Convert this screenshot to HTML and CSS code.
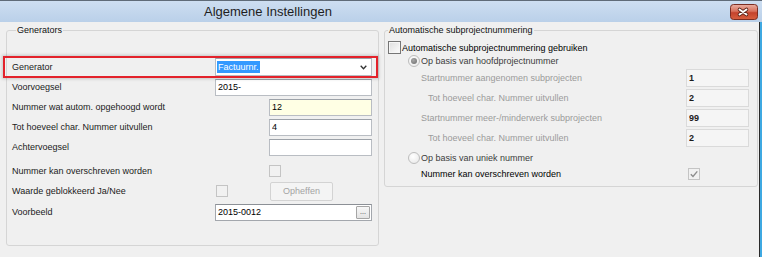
FILE: index.html
```html
<!DOCTYPE html>
<html lang="nl">
  <head>
    <meta charset="UTF-8" />
    <meta name="viewport" content="width=device-width, initial-scale=1.0" />
    <title>Algemene Instellingen</title>
    <link rel="stylesheet" href="styles.css">
  </head>
  <body>
    <div class="window">
      <div class="titlebar">
        <span class="title">Algemene Instellingen</span>
        <button class="close" aria-label="Sluiten">
          <svg width="28" height="16" viewBox="0 0 28 16">
            <defs>
              <linearGradient id="closeGrad" x1="0" y1="0" x2="0" y2="1">
                <stop offset="0" stop-color="#eab0a3" />
                <stop offset="0.45" stop-color="#d8705b" />
                <stop offset="0.55" stop-color="#c4432d" />
                <stop offset="1" stop-color="#d8603f" />
              </linearGradient>
            </defs>
            <rect x="0.5" y="0.5" width="27" height="15" rx="3" fill="url(#closeGrad)" stroke="#7b2d22" />
            <path d="M9.5 5.5 L16.5 10.5 M16.5 5.5 L9.5 10.5" stroke="#5b2419" stroke-width="3.6" stroke-linecap="round" />
            <path d="M9.5 5.5 L16.5 10.5 M16.5 5.5 L9.5 10.5" stroke="#ffffff" stroke-width="1.9" stroke-linecap="round" />
          </svg>
        </button>
      </div>

      <div class="client">
        <fieldset class="group generators">
          <legend>Generators</legend>

          <div class="row">
            <label>Generator</label>
            <div class="combo span">
              <span class="selected">Factuurnr.</span>
              <svg width="7" height="5" viewBox="0 0 7 5">
                <path d="M0.7 0.8 L3.5 3.8 L6.3 0.8" fill="none" stroke="#333" stroke-width="1.3" />
              </svg>
            </div>
          </div>

          <div class="row">
            <label>Voorvoegsel</label>
            <input class="field span" type="text" value="2015-" />
          </div>

          <div class="row">
            <label>Nummer wat autom. opgehoogd wordt</label>
            <input class="field col3 yellow" type="text" value="12" />
          </div>

          <div class="row">
            <label>Tot hoeveel char. Nummer uitvullen</label>
            <input class="field col3" type="text" value="4" />
          </div>

          <div class="row">
            <label>Achtervoegsel</label>
            <input class="field col3" type="text" value="" />
          </div>

          <div class="row spaced">
            <label>Nummer kan overschreven worden</label>
            <span class="check disabled col3"></span>
          </div>

          <div class="row">
            <label>Waarde geblokkeerd Ja/Nee</label>
            <span class="check disabled col2"></span>
            <button class="btn col3" disabled>Opheffen</button>
          </div>

          <div class="row last">
            <label>Voorbeeld</label>
            <div class="field span with-button">
              <span>2015-0012</span>
              <button class="dots">...</button>
            </div>
          </div>
        </fieldset>

        <fieldset class="group subprojects">
          <legend>Automatische subprojectnummering</legend>

          <div class="opt main">
            <span class="check"></span>
            <span class="opt-label">Automatische subprojectnummering gebruiken</span>
          </div>

          <div class="opt radio-row">
            <span class="radio checked"></span>
            <span class="opt-label muted">Op basis van hoofdprojectnummer</span>
          </div>

          <div class="sub first">
            <span class="lbl">Startnummer aangenomen subprojecten</span>
            <input class="field disabled" type="text" value="1" disabled />
          </div>

          <div class="sub indent">
            <span class="lbl">Tot hoeveel char. Nummer uitvullen</span>
            <input class="field disabled" type="text" value="2" disabled />
          </div>

          <div class="sub">
            <span class="lbl">Startnummer meer-/minderwerk subprojecten</span>
            <input class="field disabled" type="text" value="99" disabled />
          </div>

          <div class="sub indent">
            <span class="lbl">Tot hoeveel char. Nummer uitvullen</span>
            <input class="field disabled" type="text" value="2" disabled />
          </div>

          <div class="opt radio-row gap">
            <span class="radio"></span>
            <span class="opt-label muted">Op basis van uniek nummer</span>
          </div>

          <div class="opt sub-check gap">
            <span class="lbl">Nummer kan overschreven worden</span>
            <span class="check disabled">
              <svg width="10" height="10" viewBox="0 0 10 10">
                <path d="M1.8 5.2 L4 7.4 L8.3 2.4" fill="none" stroke="#8c8c8c" stroke-width="1.4" />
              </svg>
            </span>
          </div>
        </fieldset>

        <div class="frame"></div>
      </div>

      <!-- annotation round the generator row -->
      <div class="marker"></div>
    </div>
  </body>
</html>
```

FILE: styles.css
```css
* {
  box-sizing: border-box;
}

body {
  margin: 0;
  font-family: "Liberation Sans", Arial, sans-serif;
  font-size: 9px;
  color: #1b1b1b;
  background: #f0f0f0;
}

.window {
  position: relative;
  width: 762px;
  height: 257px;
  overflow: hidden;
}

/* title bar */

.titlebar {
  display: flex;
  align-items: flex-start;
  height: 22px;
  border-top: 1px solid #5f6b78;
  background: linear-gradient(#cddef1, #bad0e9);
}

.title {
  padding: 1px 0 0 204px;
  font-size: 13px;
  line-height: 20px;
  color: #1e1e1e;
}

.close {
  display: block;
  margin: 3px 4px 0 auto;
  padding: 0;
  border: 0;
  background: none;
  line-height: 0;
}

/* client area */

.client {
  display: flex;
  align-items: flex-start;
  height: 235px;
  padding: 2px 0 0 6px;
}

.frame {
  align-self: stretch;
  margin: -2px 0 0 auto;
  width: 3px;
  border-left: 1px solid #2a2a2a;
  background: #3fa9e2;
}

.group {
  margin: 0;
  padding: 0;
  min-width: 0;
  border: 1px solid #d5d5d5;
  border-radius: 3px;
}

.group legend {
  margin-left: 4px;
  padding: 0 1px;
  line-height: 12px;
  color: #111;
}

.generators {
  width: 373px;
  height: 222px;
  margin-right: 5px;
  padding: 21px 0 0 5px;
}

.subprojects {
  width: 374px;
  height: 163px;
  padding-top: 5px;
}

.subprojects legend {
  margin-left: 3px;
}

/* left rows */

.row {
  display: grid;
  grid-template-columns: 203px 54px 103px;
  align-items: center;
  height: 20px;
}

.row.spaced {
  margin-top: 4px;
}

.row.last {
  margin-top: 1px;
}

.span {
  grid-column: 2 / 4;
}

.col2 {
  grid-column: 2;
  margin-left: 1px;
}

.col3 {
  grid-column: 3;
}

.field {
  width: 100%;
  height: 17px;
  margin: 0;
  padding: 0 2px;
  border: 1px solid #b9bdc3;
  border-top-color: #9da2a9;
  background: #fff;
  font: inherit;
  line-height: 15px;
  color: #000;
  outline: none;
}

.field.yellow {
  background: #ffffe4;
}

.combo {
  display: flex;
  align-items: center;
  height: 18px;
  padding-left: 1px;
  border: 1px solid #b9bdc3;
  border-top-color: #9da2a9;
  background: #fff;
}

.combo .selected {
  padding: 0 1px;
  line-height: 12px;
  background: #3399ff;
  color: #fff;
}

.combo svg {
  margin: 1px 4px 0 auto;
}

.with-button {
  display: flex;
  align-items: center;
  padding-right: 1px;
  border-color: #a3a7ad;
  border-top-color: #8c9096;
}

.dots {
  margin-left: auto;
  width: 14px;
  height: 13px;
  padding: 0 0 2px;
  border: 1px solid #a5a5a5;
  border-radius: 1px;
  background: linear-gradient(#f7f7f7, #e3e3e3);
  font: inherit;
  font-size: 7px;
  line-height: 9px;
  color: #333;
}

.btn {
  margin-left: 1px;
  width: 63px;
  height: 19px;
  padding: 0;
  border: 1px solid #d3d3d3;
  border-radius: 2px;
  background: #f4f4f4;
  font: inherit;
  color: #a3a3a3;
}

/* checkboxes and radios */

.check {
  display: flex;
  align-items: center;
  justify-content: center;
  width: 13px;
  height: 13px;
  border: 1px solid #767676;
  background: linear-gradient(135deg, #dedede, #fcfcfc);
  box-shadow: inset 0 0 0 1px #f6f6f6;
}

.check.disabled {
  width: 12px;
  height: 12px;
  border-color: #c4c4c4;
  background: #f1f1f1;
  box-shadow: none;
}

.radio {
  position: relative;
  width: 12px;
  height: 12px;
  border: 1px solid #bdbdbd;
  border-radius: 50%;
  background: radial-gradient(circle at 40% 35%, #ffffff, #e6e6e6);
}

.radio.checked::after {
  content: "";
  position: absolute;
  left: 2px;
  top: 2px;
  width: 6px;
  height: 6px;
  border-radius: 50%;
  background: radial-gradient(circle at 40% 35%, #a8a8a8, #6a6a6a);
}

/* right rows */

.opt {
  display: flex;
  align-items: center;
  height: 13px;
}

.opt.main {
  padding-left: 3px;
}

.opt.main .opt-label {
  margin-left: 1px;
  color: #000;
}

.opt.radio-row {
  padding-left: 23px;
}

.opt.radio-row .opt-label {
  margin-left: 1px;
}

.opt.gap {
  margin-top: 3px;
}

.opt-label.muted {
  color: #3c3c3c;
}

.sub {
  display: flex;
  align-items: center;
  height: 20px;
  padding-left: 36px;
}

.sub.first {
  margin-top: 1px;
}

.sub.indent {
  padding-left: 43px;
}

.sub .lbl {
  width: 265px;
  color: #9b9b9b;
}

.sub.indent .lbl {
  width: 258px;
}

.field.disabled {
  width: 63px;
  height: 18px;
  border: 1px solid #dadada;
  background: #f5f5f5;
  font-weight: bold;
  color: #1b1b1b;
}

.opt.sub-check {
  padding-left: 36px;
}

.opt.sub-check .lbl {
  width: 267px;
  color: #000;
}

/* red annotation frame */

.marker {
  position: absolute;
  left: 3px;
  top: 56px;
  width: 375px;
  height: 22px;
  border: 2px solid #e3222b;
  box-shadow: 0 0 3px 1px rgba(0, 0, 0, 0.18);
}
```
